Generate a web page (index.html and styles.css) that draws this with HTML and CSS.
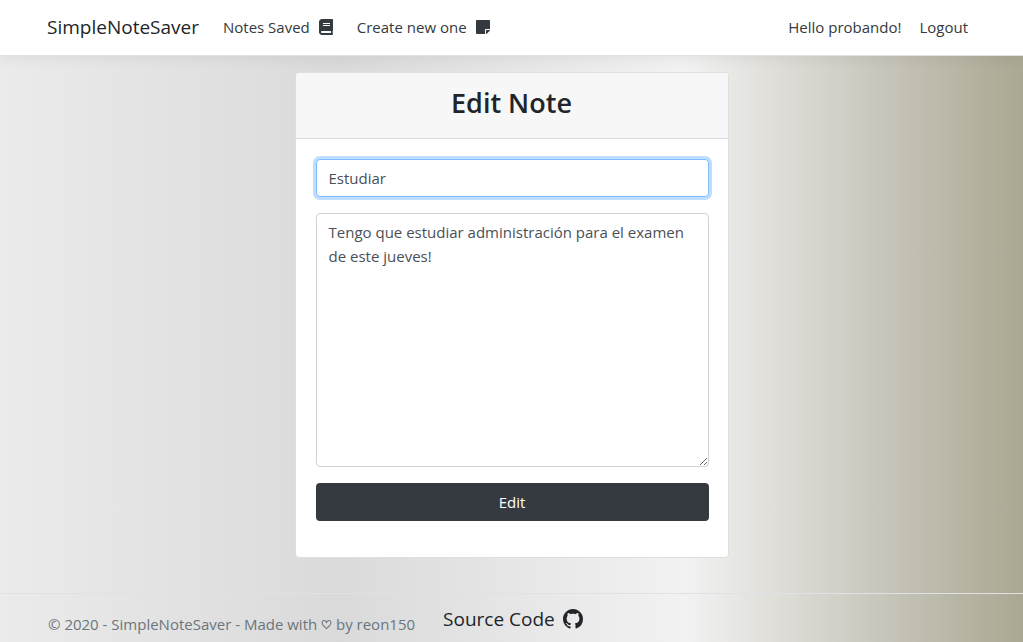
FILE: index.html
```html
<!DOCTYPE html>
<html lang="en">
<head>
<meta charset="utf-8">
<title>Edit Note - SimpleNoteSaver</title>
<meta name="viewport" content="width=device-width, initial-scale=1">
<link rel="stylesheet" href="styles.css">
</head>
<body class="page">
<header class="navbar">
  <a class="brand" href="#">SimpleNoteSaver</a>
  <nav class="nav">
    <a class="nav-link" href="#">Notes Saved
      <svg class="icon icon-book" viewBox="0 0 448 512" aria-hidden="true"><path fill="currentColor" d="M448 360V24c0-13.300-10.700-24-24-24H96C43 0 0 43 0 96v320c0 53 43 96 96 96h328c13.300 0 24-10.700 24-24v-16c0-7.500-3.500-14.300-8.900-18.700-4.200-15.400-4.200-59.300 0-74.700 5.400-4.300 8.900-11.100 8.900-18.600zM128 134c0-3.300 2.700-6 6-6h212c3.300 0 6 2.700 6 6v20c0 3.300-2.700 6-6 6H134c-3.300 0-6-2.700-6-6v-20zm0 64c0-3.300 2.700-6 6-6h212c3.300 0 6 2.700 6 6v20c0 3.300-2.700 6-6 6H134c-3.300 0-6-2.700-6-6v-20zm253.400 250H96c-17.700 0-32-14.300-32-32 0-17.600 14.400-32 32-32h285.400c-1.900 17.100-1.900 46.900 0 64z"/></svg></a>
    <a class="nav-link" href="#">Create new one
      <svg class="icon icon-note" viewBox="0 0 448 448" aria-hidden="true"><path fill="currentColor" d="M312 288h136V24c0-13.300-10.700-24-24-24H24C10.700 0 0 10.700 0 24v400c0 13.300 10.700 24 24 24h264V312c0-13.200 10.800-24 24-24zm129 55l-98 98c-4.500 4.500-10.600 7-17 7h-6V320h128v6.100c0 6.300-2.500 12.400-7 16.900z"/></svg></a>
  </nav>
  <div class="account">
    <span class="greeting">Hello probando!</span>
    <a class="nav-link" href="#">Logout</a>
  </div>
</header>
<main class="main">
  <section class="card">
    <div class="card-header"><h1 class="card-title">Edit Note</h1></div>
    <form class="card-body">
      <input class="field field-active" type="text" aria-label="Title" value="Estudiar" autofocus>
      <textarea class="field field-text" aria-label="Note">Tengo que estudiar administración para el examen de este jueves!</textarea>
      <button class="btn" type="button">Edit</button>
    </form>
  </section>
</main>
<footer class="footer">
  <p class="copyright">© 2020 - SimpleNoteSaver - Made with
    <svg class="heart" viewBox="0 0 16 16" role="img" aria-label="love"><path fill="none" stroke="currentColor" stroke-width="1.500" d="M8 14C5.500 11.500 1.500 9 1.500 5.500C1.500 1.500 6.500 1.200 8 5C9.500 1.200 14.500 1.500 14.500 5.500C14.500 9 10.500 11.500 8 14Z"/></svg>
    by reon150</p>
  <a class="source" href="#">Source Code
    <svg class="github" viewBox="0 0 16 16" aria-hidden="true"><path fill="currentColor" d="M8 0C3.580 0 0 3.580 0 8c0 3.540 2.290 6.530 5.470 7.590.4.070.55-.17.55-.38 0-.19-.01-.82-.01-1.490-2.010.37-2.530-.49-2.690-.94-.09-.23-.48-.94-.82-1.130-.28-.15-.68-.52-.01-.53.63-.01 1.080.58 1.230.82.72 1.210 1.870.87 2.330.66.07-.52.28-.87.51-1.070-1.780-.2-3.640-.89-3.640-3.950 0-.87.31-1.590.82-2.150-.08-.2-.36-1.020.08-2.120 0 0 .67-.21 2.200.82.64-.18 1.320-.27 2-.27s1.360.09 2 .27c1.530-1.040 2.200-.82 2.200-.82.44 1.100.16 1.920.08 2.120.51.56.82 1.270.82 2.150 0 3.070-1.870 3.750-3.650 3.950.29.25.54.73.54 1.480 0 1.070-.01 1.930-.01 2.200 0 .21.15.46.55.38A8.010 8.010 0 0 0 16 8c0-4.420-3.580-8-8-8z"/></svg></a>
</footer>
</body>
</html>
```
FILE: styles.css
```css
* {
  box-sizing: border-box;
}

.page {
  display: flex;
  flex-direction: column;
  min-height: 100vh;
  margin: 0;
  font-family: "Segoe UI", "Open Sans", "Noto Sans", sans-serif;
  font-size: 15px;
  line-height: 24px;
  color: #212529;
  background: linear-gradient(90deg, #ebebeb 0%, #dadada 33%, #f2f2f2 67%, #cdcbc1 84%, #aaa792 100%);
}

.page a {
  text-decoration: none;
}

.navbar {
  display: flex;
  align-items: center;
  height: 56px;
  padding: 0 55px 2px 47px;
  background: #fff;
  border-bottom: 1px solid #dee2e6;
  box-shadow: 0 4px 12px rgba(0, 0, 0, 0.05);
}

.brand {
  margin-right: 24px;
  font-size: 19px;
  color: #212529;
}

.nav {
  display: flex;
  flex: 1;
  gap: 24px;
}

.nav-link {
  display: flex;
  align-items: center;
  gap: 9px;
  color: #343a40;
}

.icon-book {
  width: 14px;
  height: 16px;
}

.icon-note {
  width: 14px;
  height: 14px;
}

.account {
  display: flex;
  gap: 18px;
}

.greeting {
  color: #343a40;
}

.main {
  display: flex;
  flex: 1;
  justify-content: center;
  padding: 16px;
}

.card {
  width: 100%;
  max-width: 434px;
  align-self: flex-start;
  overflow: hidden;
  background: #fff;
  border: 1px solid #dfdfdf;
  border-radius: 4px;
}

.card-header {
  padding: 13px 20px 18px;
  background: #f7f7f7;
  border-bottom: 1px solid #d8d8d8;
  text-align: center;
}

.card-title {
  margin: 0;
  font-size: 27px;
  line-height: 34px;
  font-weight: 600;
}

.card-body {
  display: flex;
  flex-direction: column;
  gap: 16px;
  padding: 20px 19px 36px 20px;
}

.field {
  width: 100%;
  height: 38px;
  margin: 0;
  padding: 6px 12px;
  font: inherit;
  color: #495057;
  background: #fff;
  border: 1px solid #ced4da;
  border-radius: 4px;
}

.field-active {
  border-color: #80bdff;
  outline: 0;
  box-shadow: 0 0 0 3px rgba(0, 123, 255, 0.25);
}

.field-text {
  height: 254px;
  resize: vertical;
}

.btn {
  height: 38px;
  font: inherit;
  color: #fff;
  background: #343a40;
  border: 0;
  border-radius: 4px;
}

.footer {
  display: flex;
  align-items: center;
  gap: 28px;
  height: 49px;
  padding: 2px 48px 0;
  border-top: 1px solid #dee2e6;
}

.copyright {
  margin: 0;
  padding-top: 10px;
  color: #6c757d;
}

.heart {
  width: 11px;
  height: 11px;
}

.source {
  display: flex;
  align-items: center;
  gap: 8px;
  font-size: 19px;
  color: #212529;
}

.github {
  width: 20px;
  height: 20px;
}
```
